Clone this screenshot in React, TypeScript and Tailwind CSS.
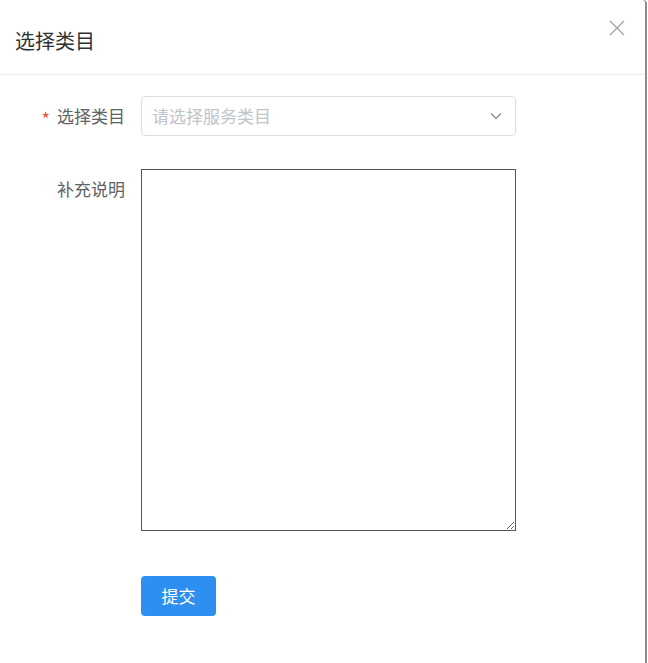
import { useState } from "react";

const FONT = { fontFamily: '"Noto Sans CJK SC", "Noto Sans", sans-serif' };

export default function App() {
  const [note, setNote] = useState("");

  return (
    <div className="w-[648px] h-[663px] bg-white flex" style={FONT}>
      <div className="w-[647px] h-full bg-white border-r-2 border-[#8c8c8c] rounded-tr-[4px] flex flex-col">
        {/* header */}
        <div className="h-[75px] border-b border-[#ebeef5] flex items-start justify-between">
          <h2 className="pl-[15px] pt-[29px] text-[20px] leading-[24px] text-[#303133]">选择类目</h2>
          <button className="mt-[19px] mr-[19px] w-[18px] h-[18px] flex items-center justify-center text-[#a0a3a8]">
            <svg viewBox="0 0 18 18" className="w-[18px] h-[18px]" fill="none" stroke="currentColor" strokeWidth={1.3}>
              <path d="M2 2l14 14M16 2L2 16" />
            </svg>
          </button>
        </div>

        {/* form */}
        <div className="pt-[20px] flex flex-col">
          <div className="flex items-center">
            <label className="w-[141px] pr-[16px] text-right text-[17px] leading-[40px] text-[#606266]">
              <span className="relative top-[3px] text-[18px] text-[#f2512e] mr-[7px]">*</span>选择类目
            </label>
            <div className="w-[375px] h-[40px] border border-[#dcdfe6] rounded-[4px] flex items-center justify-between pl-[10px] pr-[13px]">
              <span className="text-[17px] text-[#c0c4cc]">请选择服务类目</span>
              <svg viewBox="0 0 12 8" className="w-[12px] h-[8px]" fill="none" stroke="#909399" strokeWidth={1.5}>
                <path d="M1 1.5l5 5 5-5" />
              </svg>
            </div>
          </div>

          <div className="flex items-start mt-[33px]">
            <label className="w-[141px] pr-[16px] text-right text-[17px] leading-[40px] text-[#606266]">补充说明</label>
            <textarea
              value={note}
              onChange={(e) => setNote(e.target.value)}
              className="w-[375px] h-[362px] border border-[#555555] bg-white outline-none block"
            />
          </div>

          <div className="flex mt-[45px] pl-[141px]">
            <button className="w-[75px] h-[40px] rounded-[4px] bg-[#2d8ff0] text-white text-[17px]">提交</button>
          </div>
        </div>
      </div>
    </div>
  );
}
